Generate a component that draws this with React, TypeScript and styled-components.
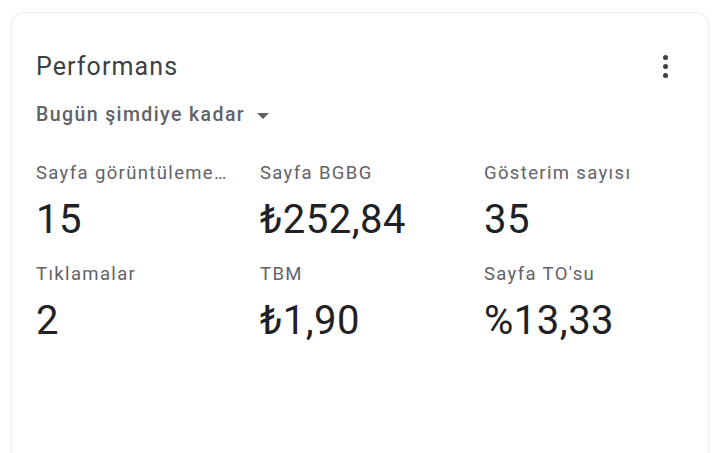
import React from "react";
import styled, { createGlobalStyle } from "styled-components";

const Global = createGlobalStyle`
  html, body { margin: 0; padding: 0; background: #ffffff; }
  body { font-family: Roboto, "Noto Sans", Arial, sans-serif; -webkit-font-smoothing: antialiased; }
`;

const Page = styled.div`
  padding: 13px 12px 0 12px;
  height: 453px;
  box-sizing: border-box;
  overflow: hidden;
`;

const Card = styled.div`
  background: #fff;
  border-radius: 12px;
  box-shadow: 0 0 2px rgba(0,0,0,0.2), 0 1px 3px rgba(0,0,0,0.08);
  height: 480px;
  padding: 38px 24px 0 24px;
  box-sizing: border-box;
`;

const Header = styled.div`
  display: flex;
  align-items: flex-start;
  justify-content: space-between;
`;

const Title = styled.div`
  font-size: 25px;
  line-height: 32px;
  color: #3c4043;
  letter-spacing: 1.1px;
`;

const Kebab = styled.div`
  display: flex;
  flex-direction: column;
  gap: 4px;
  margin: 4px 16px 0 0;
`;

const Dot = styled.span`
  width: 5px;
  height: 5px;
  border-radius: 50%;
  background: #3c4043;
`;

const Range = styled.div`
  display: flex;
  align-items: center;
  gap: 8px;
  margin-top: 19px;
  font-size: 19.5px;
  font-weight: 500;
  line-height: 26px;
  color: #5f6368;
  letter-spacing: 1.4px;
`;

const Caret = styled.span`
  width: 0;
  height: 0;
  border-left: 6px solid transparent;
  border-right: 6px solid transparent;
  border-top: 6px solid #5f6368;
  margin-left: 4px;
  margin-top: 2px;
`;

const Grid = styled.div`
  display: grid;
  grid-template-columns: 224px 224px 200px;
  row-gap: 18px;
  margin-top: 33px;
`;

const Metric = styled.div`
  display: flex;
  flex-direction: column;
`;

const Label = styled.div`
  font-size: 18.5px;
  line-height: 24px;
  color: #5f6368;
  letter-spacing: 1.35px;
  white-space: nowrap;
  overflow: hidden;
  text-overflow: ellipsis;
  max-width: 192px;
`;

const Value = styled.div`
  font-size: 40px;
  line-height: 48px;
  color: #202124;
  margin-top: 11px;
  letter-spacing: 0.5px;
`;

const metrics = [
  { label: "Sayfa görüntülemeleri", value: "15" },
  { label: "Sayfa BGBG", value: "₺252,84" },
  { label: "Gösterim sayısı", value: "35" },
  { label: "Tıklamalar", value: "2" },
  { label: "TBM", value: "₺1,90" },
  { label: "Sayfa TO'su", value: "%13,33" },
];

export default function App() {
  return (
    <>
      <Global />
      <Page>
        <Card>
          <Header>
            <Title>Performans</Title>
            <Kebab>
              <Dot />
              <Dot />
              <Dot />
            </Kebab>
          </Header>
          <Range>
            Bugün şimdiye kadar
            <Caret />
          </Range>
          <Grid>
            {metrics.map((m) => (
              <Metric key={m.label}>
                <Label>{m.label}</Label>
                <Value>{m.value}</Value>
              </Metric>
            ))}
          </Grid>
        </Card>
      </Page>
    </>
  );
}
